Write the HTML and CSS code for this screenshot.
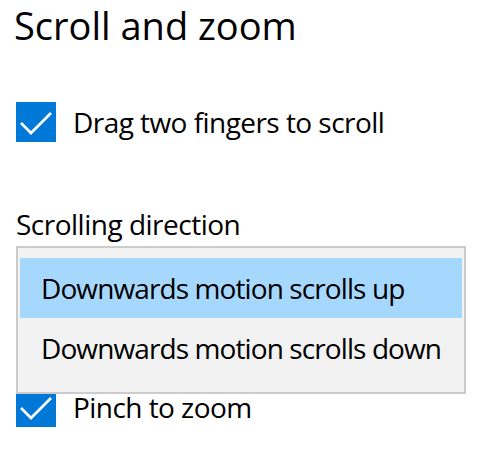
FILE: index.html
```html
<!DOCTYPE html>
<html>
<head>
<meta charset="utf-8">
<link rel="stylesheet" href="styles.css">
</head>
<body>
<main class="page">
  <h1 class="title">Scroll and zoom</h1>
  <label class="check-row first">
    <span class="box"><svg viewBox="0 0 40 40" width="40" height="40"><path d="M5 21 L15 31 L35 11" fill="none" stroke="#fff" stroke-width="2.7" stroke-linecap="butt" stroke-linejoin="miter"/></svg></span>
    <span class="check-label">Drag two fingers to scroll</span>
  </label>
  <div class="field">
    <div class="field-label">Scrolling direction</div>
    <div class="combo"></div>
    <ul class="popup">
      <li class="option selected">Downwards motion scrolls up</li>
      <li class="option">Downwards motion scrolls down</li>
    </ul>
  </div>
  <label class="check-row">
    <span class="box"><svg viewBox="0 0 40 40" width="40" height="40"><path d="M5 21 L15 31 L35 11" fill="none" stroke="#fff" stroke-width="2.7" stroke-linecap="butt" stroke-linejoin="miter"/></svg></span>
    <span class="check-label">Pinch to zoom</span>
  </label>
</main>
</body>
</html>
```

FILE: styles.css
```css
html, body {
  margin: 0;
  padding: 0;
  background: #ffffff;
}
body {
  font-family: "Open Sans", "Noto Sans", sans-serif;
  color: #000;
  width: 504px;
  height: 475px;
  overflow: hidden;
}
.page {
  padding: 0 0 0 16px;
  display: flex;
  flex-direction: column;
}
.title {
  margin: 0 0 0 -2px;
  font-weight: 400;
  font-size: 38px;
  line-height: 50px;
  white-space: nowrap;
}
.check-row {
  display: flex;
  align-items: center;
  gap: 17px;
  height: 40px;
}
.check-row.first {
  margin-top: 52px;
}
.box {
  width: 40px;
  height: 40px;
  background: #0078d7;
  display: block;
  flex: none;
}
.box svg { display: block; }
.check-label {
  font-size: 28px;
  line-height: 40px;
  letter-spacing: -0.55px;
  white-space: nowrap;
}
.field {
  position: relative;
  margin-top: 62px;
  height: 183px;
}
.field-label {
  font-size: 28px;
  line-height: 40px;
  letter-spacing: -0.5px;
  white-space: nowrap;
}
.combo {
  height: 64px;
}
.popup {
  position: absolute;
  left: 0;
  top: 42px;
  margin: 0;
  padding: 10px 2px 0 2px;
  box-sizing: border-box;
  width: 450px;
  height: 148px;
  list-style: none;
  background: #f2f2f2;
  border: 2px solid #cccccc;
  z-index: 2;
}
.option {
  height: 60px;
  display: flex;
  align-items: center;
  padding-left: 21px;
  font-size: 28px;
  letter-spacing: -0.9px;
  white-space: nowrap;
}
.option.selected {
  background: #a6d8fe;
}
```
